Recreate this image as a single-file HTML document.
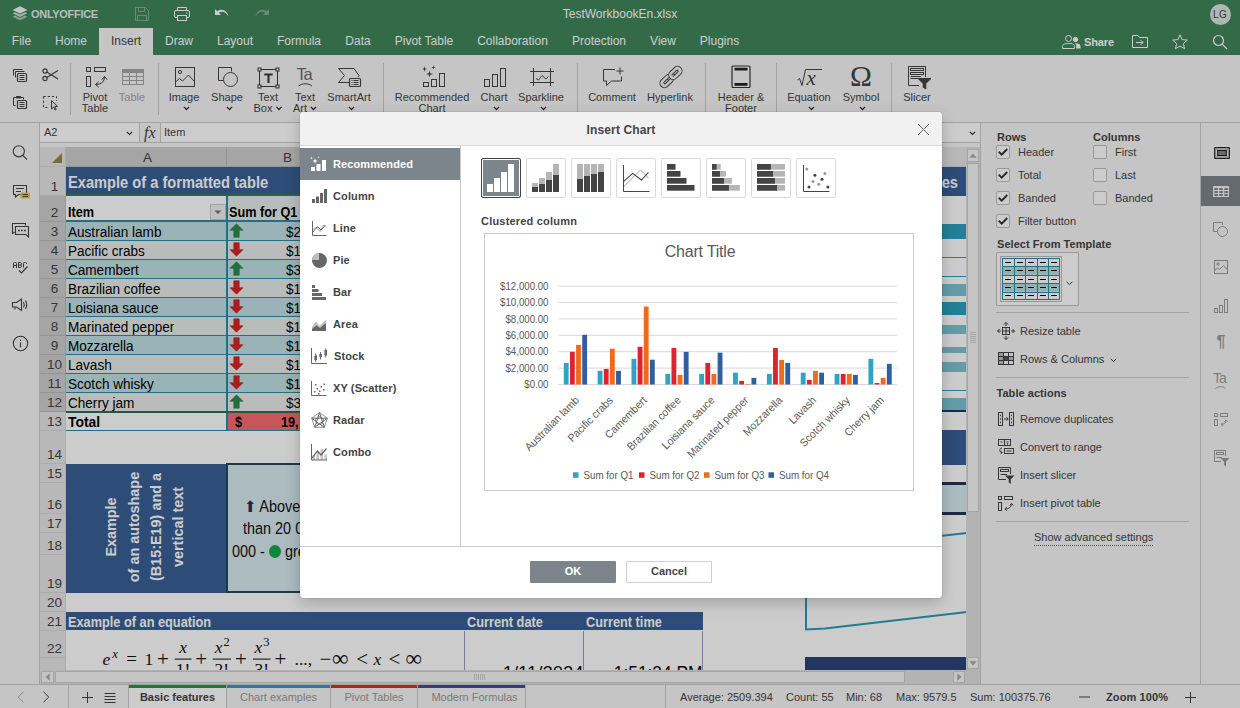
<!DOCTYPE html>
<html lang="en">
<head>
<meta charset="utf-8">
<title>TestWorkbookEn.xlsx</title>
<style>
*{box-sizing:border-box;margin:0;padding:0}
html,body{width:1240px;height:708px;overflow:hidden;background:#f7f7f7;font-family:"Liberation Sans",sans-serif;font-size:11px;color:#444}
.abs{position:absolute}
#app{position:absolute;left:0;top:0;width:1240px;height:708px;overflow:hidden;background:#f7f7f7}
/* ===== header ===== */
#hdr{position:absolute;left:0;top:0;width:1240px;height:54px;background:#40865c;color:#fff}
#hdr .logo{position:absolute;left:31px;top:8px;font-size:11px;font-weight:bold;letter-spacing:-.3px;color:#e3ede7}
#hdr .title{position:absolute;left:0;width:1240px;top:7px;text-align:center;font-size:12px;color:#fff}
#hdr .avatar{position:absolute;left:1209.5px;top:3.5px;width:21px;height:21px;border-radius:50%;background:#d9e7de;color:#444;font-size:10px;font-weight:normal;text-align:center;line-height:21px;letter-spacing:.3px}
.tab{position:absolute;top:28px;height:26px;line-height:26px;font-size:12px;color:#fff;text-align:center;white-space:nowrap}
.tab.act{background:#f7f7f7;color:#444}
/* ===== toolbar ===== */
#tb{position:absolute;left:0;top:54px;width:1240px;height:69px;background:#f7f7f7;border-bottom:1px solid #cbcbcb;overflow:hidden}
.sep{position:absolute;top:9px;width:1px;height:52px;background:#cbcbcb}
.cap{position:absolute;top:38px;font-size:11px;line-height:11px;color:#444;text-align:center;white-space:nowrap;transform:translateX(-50%)}
.cap.dis{color:#a5a5a5}
.ico{position:absolute;overflow:visible}
/* ===== left bar ===== */
#lb{position:absolute;left:0;top:123px;width:40px;height:561px;background:#f7f7f7;border-right:1px solid #cbcbcb}
/* ===== formula bar ===== */
#fb{position:absolute;left:40px;top:123px;width:940px;height:20px;background:#fff;border-bottom:1px solid #cbcbcb}
#fb .nm{position:absolute;left:0;top:0;width:100px;height:19px;border-right:1px solid #cbcbcb;line-height:19px;padding-left:4px;font-size:11px;color:#444}
#fb .fx{position:absolute;left:100px;top:0;width:21px;height:19px;border-right:1px solid #cbcbcb;background:#f7f7f7}
#fb .val{position:absolute;left:124px;top:0;line-height:19px;font-size:11px;color:#444}
/* ===== sheet ===== */
#sheet{position:absolute;left:0;top:0;width:981px;height:685px;background:#f7f7f7;overflow:hidden}
#grid{position:absolute;left:0;top:4px;width:926px;height:521px;background:#fff;overflow:hidden}
.ch{position:absolute;top:0;height:20px;background:#e6e6e6;border-right:1px solid #d8d8d8;border-bottom:1px solid #d8d8d8;font-size:13.5px;line-height:21px;text-align:center;color:#444;padding-left:3px}
.ch.sel{background:#cfcfcf;border-color:#bbb}
.rh{position:absolute;left:0;width:26px;background:#e6e6e6;border-right:1px solid #d8d8d8;border-bottom:1px solid #d8d8d8;font-size:13.5px;text-align:center;color:#444}
.rh.sel{background:#cfcfcf;border-color:#bbb}
.rh span{position:absolute;left:4px;right:0;bottom:0;line-height:17px}
.cell{position:absolute;font-family:"Liberation Sans","DejaVu Sans",sans-serif;font-size:14.67px;color:#000;white-space:nowrap;transform-origin:0 50%;transform:scaleX(.925)}
.cell.bd{font-weight:bold;transform:scaleX(.865)}
/* ===== right panel ===== */
#rp{position:absolute;left:980px;top:123px;width:220px;height:561px;background:#f7f7f7;border-left:1px solid #cbcbcb;font-size:11px;color:#444}
#rb{position:absolute;left:1200px;top:123px;width:40px;height:561px;background:#f7f7f7;border-left:1px solid #cbcbcb}
.lbl{position:absolute;white-space:nowrap;line-height:13px}
.b{font-weight:bold}
.chk{position:absolute;width:14px;height:14px;border:1px solid #c0c0c0;border-radius:2px;background:#fff}
.hr{position:absolute;left:15px;width:193px;height:1px;background:#cbcbcb}
/* ===== status bar ===== */
#sb{position:absolute;left:0;top:684px;width:1240px;height:24px;background:#f7f7f7;border-top:1px solid #cbcbcb;font-size:11px;color:#444}
.st{position:absolute;top:0;height:23px;line-height:24px;white-space:nowrap;text-align:center}
/* ===== modal ===== */
#mask{position:absolute;left:0;top:0;width:1240px;height:708px;background:rgba(0,0,0,.2)}
#dlg{position:absolute;left:300px;top:112px;width:642px;height:486px;background:#fff;border-radius:4px;box-shadow:0 5px 15px rgba(0,0,0,.2),0 0 0 1px rgba(0,0,0,.06);overflow:hidden;font-size:11px;color:#444}
#dlg .head{position:absolute;left:0;top:0;width:642px;height:34px;background:#f1f1f1;border-bottom:1px solid #d8d8d8;text-align:center;line-height:36px;font-size:12px;font-weight:bold;letter-spacing:.01em}
#dlg .menu{position:absolute;left:0;top:34px;width:161px;height:400px;border-right:1px solid #cbcbcb}
.mi{position:absolute;left:0;width:160px;height:32px;line-height:32px;padding-left:33px;font-weight:bold;letter-spacing:.01em;font-size:11px;color:#444}
.mi.act{background:#7d858c;color:#fff}
#dlg .foot{position:absolute;left:0;top:434px;width:642px;height:52px;border-top:1px solid #cbcbcb}
.btn{position:absolute;top:14px;height:22px;width:86px;line-height:18px;text-align:center;font-weight:bold;font-size:11px;border-radius:1px}
.btn.pri{background:#7d858c;color:#fff;line-height:20px}
.btn.sec{background:#fff;border:1px solid #cfcfcf;color:#444}
.ct{position:absolute;top:47px;width:40px;height:40px;border:1px solid #d8dadc;border-radius:2px;background:#fff}
.ct.act{background:#7d858c;border-color:#444;box-shadow:inset 0 0 0 1px #fff}
</style>
</head>
<body>
<div id="app">
<div id="sheet">
<div class="abs" style="left:66px;top:167px;width:901px;height:503px;background:#fff"></div>
<div class="abs" style="left:40px;top:147px;width:926px;height:20px;background:#e6e6e6;border-bottom:1px solid #d8d8d8"></div>
<div class="ch" style="left:40px;top:147px;width:26px"><svg class="ico" style="left:11px;top:5px" width="12" height="12" viewBox="0 0 12 12"><path d="M11 1 V11 H1 Z" fill="#8c8c3c"/></svg></div>
<div class="ch sel" style="left:66px;top:147px;width:161px">A</div>
<div class="ch sel" style="left:227px;top:147px;width:119px">B</div>
<div class="ch sel" style="left:346px;top:147px;width:119px">C</div>
<div class="ch sel" style="left:465px;top:147px;width:119px">D</div>
<div class="ch sel" style="left:584px;top:147px;width:119px">E</div>
<div class="ch" style="left:703px;top:147px;width:102px">F</div>
<div class="ch" style="left:805px;top:147px;width:162px">G</div>
<div class="rh" style="left:40px;top:167px;height:29px"><span>1</span></div>
<div class="rh sel" style="left:40px;top:196px;height:26px"><span>2</span></div>
<div class="rh sel" style="left:40px;top:222px;height:19px"><span>3</span></div>
<div class="rh sel" style="left:40px;top:241px;height:19px"><span>4</span></div>
<div class="rh sel" style="left:40px;top:260px;height:19px"><span>5</span></div>
<div class="rh sel" style="left:40px;top:279px;height:19px"><span>6</span></div>
<div class="rh sel" style="left:40px;top:298px;height:19px"><span>7</span></div>
<div class="rh sel" style="left:40px;top:317px;height:19px"><span>8</span></div>
<div class="rh sel" style="left:40px;top:336px;height:19px"><span>9</span></div>
<div class="rh sel" style="left:40px;top:355px;height:19px"><span>10</span></div>
<div class="rh sel" style="left:40px;top:374px;height:19px"><span>11</span></div>
<div class="rh sel" style="left:40px;top:393px;height:19px"><span>12</span></div>
<div class="rh" style="left:40px;top:412px;height:19px"><span>13</span></div>
<div class="rh" style="left:40px;top:431px;height:33px"><span>14</span></div>
<div class="rh" style="left:40px;top:464px;height:19px"><span>15</span></div>
<div class="rh" style="left:40px;top:483px;height:31px"><span>16</span></div>
<div class="rh" style="left:40px;top:514px;height:19px"><span>17</span></div>
<div class="rh" style="left:40px;top:533px;height:22px"><span>18</span></div>
<div class="rh" style="left:40px;top:555px;height:38px"><span>19</span></div>
<div class="rh" style="left:40px;top:593px;height:19px"><span>20</span></div>
<div class="rh" style="left:40px;top:612px;height:19px"><span>21</span></div>
<div class="rh" style="left:40px;top:631px;height:27px"><span>22</span></div>
<div class="rh" style="left:40px;top:658px;height:43px"></div>
<div class="abs" style="left:66px;top:167px;width:901px;height:27px;background:#3a5f96"></div>
<div class="abs" style="left:66px;top:194px;width:637px;height:2px;background:#3b7a57"></div>
<div class="abs" style="left:703px;top:194px;width:264px;height:2px;background:#3a5f96"></div>
<div class="cell" style="left:68px;top:173px;font-size:16px;font-weight:bold;color:#fff;line-height:20px;transform:scaleX(.915)">Example of a formatted table</div>
<div class="cell" style="right:23px;top:173px;font-size:16px;font-weight:bold;color:#fff;line-height:20px;transform:scaleX(.915);transform-origin:100% 50%">Sparklines</div>
<div class="abs" style="left:228px;top:196px;width:475px;height:24px;background:#e6edec"></div>
<div class="abs" style="left:66px;top:222px;width:637px;height:18px;background:#c1e0e5"></div>
<div class="abs" style="left:66px;top:240px;width:637px;height:1px;background:#2b8ca6"></div>
<div class="cell" style="left:68px;top:224px;line-height:17px">Australian lamb</div>
<svg class="ico" style="left:229px;top:223px" width="15" height="15" viewBox="0 0 15 15"><path d="M7.500 .8 L14 7.300 H10.200 V14.200 H4.800 V7.300 H1 Z" fill="#2f8a4e" stroke="#287a44" stroke-width=".6"/></svg>
<div class="cell" style="left:286px;top:224px;line-height:17px;width:60px">$2</div>
<div class="abs" style="left:66px;top:241px;width:637px;height:18px;background:#e6edec"></div>
<div class="abs" style="left:66px;top:259px;width:637px;height:1px;background:#2b8ca6"></div>
<div class="cell" style="left:68px;top:243px;line-height:17px">Pacific crabs</div>
<svg class="ico" style="left:229px;top:242px" width="15" height="15" viewBox="0 0 15 15"><path d="M7.500 14.200 L14 7.700 H10.200 V.8 H4.800 V7.700 H1 Z" fill="#d92525" stroke="#c01f1f" stroke-width=".6"/></svg>
<div class="cell" style="left:286px;top:243px;line-height:17px;width:60px">$1</div>
<div class="abs" style="left:66px;top:260px;width:637px;height:18px;background:#c1e0e5"></div>
<div class="abs" style="left:66px;top:278px;width:637px;height:1px;background:#2b8ca6"></div>
<div class="cell" style="left:68px;top:262px;line-height:17px">Camembert</div>
<svg class="ico" style="left:229px;top:261px" width="15" height="15" viewBox="0 0 15 15"><path d="M7.500 .8 L14 7.300 H10.200 V14.200 H4.800 V7.300 H1 Z" fill="#2f8a4e" stroke="#287a44" stroke-width=".6"/></svg>
<div class="cell" style="left:286px;top:262px;line-height:17px;width:60px">$3</div>
<div class="abs" style="left:66px;top:279px;width:637px;height:18px;background:#e6edec"></div>
<div class="abs" style="left:66px;top:297px;width:637px;height:1px;background:#2b8ca6"></div>
<div class="cell" style="left:68px;top:281px;line-height:17px">Brazilian coffee</div>
<svg class="ico" style="left:229px;top:280px" width="15" height="15" viewBox="0 0 15 15"><path d="M7.500 14.200 L14 7.700 H10.200 V.8 H4.800 V7.700 H1 Z" fill="#d92525" stroke="#c01f1f" stroke-width=".6"/></svg>
<div class="cell" style="left:286px;top:281px;line-height:17px;width:60px">$1</div>
<div class="abs" style="left:66px;top:298px;width:637px;height:18px;background:#c1e0e5"></div>
<div class="abs" style="left:66px;top:316px;width:637px;height:1px;background:#2b8ca6"></div>
<div class="cell" style="left:68px;top:300px;line-height:17px">Loisiana sauce</div>
<svg class="ico" style="left:229px;top:299px" width="15" height="15" viewBox="0 0 15 15"><path d="M7.500 14.200 L14 7.700 H10.200 V.8 H4.800 V7.700 H1 Z" fill="#d92525" stroke="#c01f1f" stroke-width=".6"/></svg>
<div class="cell" style="left:286px;top:300px;line-height:17px;width:60px">$1</div>
<div class="abs" style="left:66px;top:317px;width:637px;height:18px;background:#e6edec"></div>
<div class="abs" style="left:66px;top:335px;width:637px;height:1px;background:#2b8ca6"></div>
<div class="cell" style="left:68px;top:319px;line-height:17px">Marinated pepper</div>
<svg class="ico" style="left:229px;top:318px" width="15" height="15" viewBox="0 0 15 15"><path d="M7.500 14.200 L14 7.700 H10.200 V.8 H4.800 V7.700 H1 Z" fill="#d92525" stroke="#c01f1f" stroke-width=".6"/></svg>
<div class="cell" style="left:286px;top:319px;line-height:17px;width:60px">$1</div>
<div class="abs" style="left:66px;top:336px;width:637px;height:18px;background:#c1e0e5"></div>
<div class="abs" style="left:66px;top:354px;width:637px;height:1px;background:#2b8ca6"></div>
<div class="cell" style="left:68px;top:338px;line-height:17px">Mozzarella</div>
<svg class="ico" style="left:229px;top:337px" width="15" height="15" viewBox="0 0 15 15"><path d="M7.500 14.200 L14 7.700 H10.200 V.8 H4.800 V7.700 H1 Z" fill="#d92525" stroke="#c01f1f" stroke-width=".6"/></svg>
<div class="cell" style="left:286px;top:338px;line-height:17px;width:60px">$1</div>
<div class="abs" style="left:66px;top:355px;width:637px;height:18px;background:#e6edec"></div>
<div class="abs" style="left:66px;top:373px;width:637px;height:1px;background:#2b8ca6"></div>
<div class="cell" style="left:68px;top:357px;line-height:17px">Lavash</div>
<svg class="ico" style="left:229px;top:356px" width="15" height="15" viewBox="0 0 15 15"><path d="M7.500 14.200 L14 7.700 H10.200 V.8 H4.800 V7.700 H1 Z" fill="#d92525" stroke="#c01f1f" stroke-width=".6"/></svg>
<div class="cell" style="left:286px;top:357px;line-height:17px;width:60px">$1</div>
<div class="abs" style="left:66px;top:374px;width:637px;height:18px;background:#c1e0e5"></div>
<div class="abs" style="left:66px;top:392px;width:637px;height:1px;background:#2b8ca6"></div>
<div class="cell" style="left:68px;top:376px;line-height:17px">Scotch whisky</div>
<svg class="ico" style="left:229px;top:375px" width="15" height="15" viewBox="0 0 15 15"><path d="M7.500 14.200 L14 7.700 H10.200 V.8 H4.800 V7.700 H1 Z" fill="#d92525" stroke="#c01f1f" stroke-width=".6"/></svg>
<div class="cell" style="left:286px;top:376px;line-height:17px;width:60px">$1</div>
<div class="abs" style="left:66px;top:393px;width:637px;height:18px;background:#e6edec"></div>
<div class="abs" style="left:66px;top:411px;width:637px;height:1px;background:#2b8ca6"></div>
<div class="cell" style="left:68px;top:395px;line-height:17px">Cherry jam</div>
<svg class="ico" style="left:229px;top:394px" width="15" height="15" viewBox="0 0 15 15"><path d="M7.500 .8 L14 7.300 H10.200 V14.200 H4.800 V7.300 H1 Z" fill="#2f8a4e" stroke="#287a44" stroke-width=".6"/></svg>
<div class="cell" style="left:286px;top:395px;line-height:17px;width:60px">$3</div>
<div class="abs" style="left:66px;top:220px;width:637px;height:2px;background:#2b8ca6"></div>
<div class="abs" style="left:226px;top:196px;width:1.600px;height:215px;background:#2b8ca6"></div>
<div class="cell" style="left:68px;top:203px;line-height:18px;font-weight:bold;transform:scaleX(.865)">Item</div>
<div class="abs" style="left:210px;top:204px;width:16px;height:16px;background:#f1f1f1;border:1px solid #cfcfcf"><svg class="ico" style="left:3px;top:5px" width="8" height="5" viewBox="0 0 8 5"><path d="M.5 .5 H7.500 L4 4.300 Z" fill="#7a7a7a"/></svg></div>
<div class="cell" style="left:229px;top:203px;line-height:18px;font-weight:bold;transform:scaleX(.865)">Sum for Q1</div>
<div class="abs" style="left:66px;top:411px;width:637px;height:2px;background:#2f6b57"></div>
<div class="cell" style="left:68px;top:414px;line-height:17px;font-weight:bold;transform:scaleX(.95)">Total</div>
<div class="abs" style="left:227.500px;top:413px;width:475.500px;height:17px;background:#fb6b6f"></div>
<div class="abs" style="left:226px;top:413px;width:1.500px;height:17px;background:#2b8ca6"></div>
<div class="cell" style="left:235px;top:414px;line-height:17px;font-weight:bold;transform:scaleX(.865)">$</div>
<div class="cell" style="left:281px;top:414px;line-height:17px;font-weight:bold;transform:scaleX(.865)">19,</div>
<div class="abs" style="left:66px;top:430px;width:637px;height:1px;background:#2b8ca6"></div>
<div class="abs" style="left:66px;top:464px;width:161px;height:129px;background:#3a5f96"></div>
<div class="abs" style="left:111px;top:527px;width:0;height:0"><div style="position:absolute;left:-70px;top:-10px;width:140px;height:20px;line-height:20px;text-align:center;transform:rotate(-90deg);color:#fff;font-weight:bold;font-size:14.400px;white-space:nowrap">Example</div></div>
<div class="abs" style="left:133.5px;top:527px;width:0;height:0"><div style="position:absolute;left:-70px;top:-10px;width:140px;height:20px;line-height:20px;text-align:center;transform:rotate(-90deg);color:#fff;font-weight:bold;font-size:14.400px;white-space:nowrap">of an autoshape</div></div>
<div class="abs" style="left:155.5px;top:527px;width:0;height:0"><div style="position:absolute;left:-70px;top:-10px;width:140px;height:20px;line-height:20px;text-align:center;transform:rotate(-90deg);color:#fff;font-weight:bold;font-size:14.400px;white-space:nowrap">(B15:E19) and a</div></div>
<div class="abs" style="left:178px;top:527px;width:0;height:0"><div style="position:absolute;left:-70px;top:-10px;width:140px;height:20px;line-height:20px;text-align:center;transform:rotate(-90deg);color:#fff;font-weight:bold;font-size:14.400px;white-space:nowrap">vertical text</div></div>
<div class="abs" style="left:226px;top:463px;width:479px;height:130px;background:#d6eaf0;border:2px solid #1f4a55"></div>
<div class="cell" style="left:244px;top:495px;line-height:24px;font-size:15.600px;color:#111"><span style="color:#2b2b55">&#11014;</span> Above 20 000</div>
<div class="cell" style="left:243px;top:517px;line-height:24px;font-size:15.600px;color:#111">than 20 000</div>
<div class="cell" style="left:232px;top:540px;line-height:24px;font-size:15.600px;color:#111">000 - <span style="display:inline-block;width:13px;height:13px;border-radius:50%;background:#13a84a;vertical-align:-1px"></span> green</div>
<div class="abs" style="left:66px;top:612px;width:637px;height:18px;background:#3a5f96"></div>
<div class="cell" style="left:68px;top:614px;line-height:17px;font-weight:bold;color:#fff;transform:scaleX(.87)">Example of an equation</div>
<div class="cell" style="left:467px;top:614px;line-height:17px;font-weight:bold;color:#fff;transform:scaleX(.87)">Current date</div>
<div class="cell" style="left:586px;top:614px;line-height:17px;font-weight:bold;color:#fff;transform:scaleX(.87)">Current time</div>
<div class="abs" style="left:464px;top:631px;width:1px;height:40px;background:#9a9ac8"></div>
<div class="abs" style="left:583px;top:631px;width:1px;height:40px;background:#9a9ac8"></div>
<div class="abs" style="left:702px;top:631px;width:1px;height:40px;background:#9a9ac8"></div>
<div class="cell" style="left:465px;width:118.500px;text-align:right;top:662px;line-height:22px;font-size:18.670px;color:#111;transform:scaleX(.99);transform-origin:100% 50%">1/11/2024</div>
<div class="cell" style="left:584px;width:118.500px;text-align:right;top:662px;line-height:22px;font-size:18.670px;color:#111;transform:scaleX(.93);transform-origin:100% 50%">1:51:34 PM</div>
<svg class="ico" style="left:90px;top:628px" width="350" height="42" viewBox="0 0 350 42" font-family="Liberation Serif, serif" fill="#111"><text x="12.5" y="36.7" font-size="17.5" font-style="italic" text-anchor="start">e</text><text x="22.3" y="30.200000000000003" font-size="12.5" font-style="italic" text-anchor="start">x</text><text x="36.2" y="37.0" font-size="19" text-anchor="start">=</text><text x="54.5" y="36.7" font-size="17.5" text-anchor="start">1</text><text x="67" y="37.5" font-size="21" text-anchor="start">+</text><rect x="84.7" y="30.600" width="16.9" height="1" fill="#111"/><text x="93.15" y="24.5" font-size="17.5" font-style="italic" text-anchor="middle">x</text><text x="93.15" y="47" font-size="17.5" text-anchor="middle">1!</text><rect x="122.8" y="30.600" width="18.2" height="1" fill="#111"/><text x="128.6" y="24.5" font-size="17.5" font-style="italic" text-anchor="middle">x</text><text x="133.4" y="17.5" font-size="12.5" text-anchor="start">2</text><text x="131.9" y="47" font-size="17.5" text-anchor="middle">2!</text><rect x="163" y="30.600" width="17.6" height="1" fill="#111"/><text x="168.5" y="24.5" font-size="17.5" font-style="italic" text-anchor="middle">x</text><text x="173.3" y="17.5" font-size="12.5" text-anchor="start">3</text><text x="171.8" y="47" font-size="17.5" text-anchor="middle">3!</text><text x="105.3" y="37.5" font-size="21" text-anchor="start">+</text><text x="144.9" y="37.5" font-size="21" text-anchor="start">+</text><text x="184.4" y="37.5" font-size="21" text-anchor="start">+</text><text x="204.6" y="36.7" font-size="17.5" text-anchor="start">...,</text><text x="229.5" y="37.5" font-size="21" text-anchor="start">&#8722;</text><text x="242" y="38.2" font-size="23" text-anchor="start">&#8734;</text><text x="266.2" y="37.5" font-size="21" text-anchor="start">&lt;</text><text x="283.5" y="36.7" font-size="17.5" font-style="italic" text-anchor="start">x</text><text x="298.5" y="37.5" font-size="21" text-anchor="start">&lt;</text><text x="315.5" y="38.2" font-size="23" text-anchor="start">&#8734;</text></svg>
<div class="abs" style="left:805px;top:196px;width:162px;height:472px;background:#fff"></div>
<div class="abs" style="left:805px;top:224px;width:162px;height:15px;background:#2aa0bd"></div>
<div class="abs" style="left:805px;top:257px;width:162px;height:1px;background:#2aa0bd"></div>
<div class="abs" style="left:805px;top:276px;width:162px;height:1px;background:#2aa0bd"></div>
<div class="abs" style="left:805px;top:284px;width:162px;height:12px;background:#7cc3d3"></div>
<div class="abs" style="left:805px;top:302px;width:162px;height:13px;background:#2aa0bd"></div>
<div class="abs" style="left:805px;top:325px;width:162px;height:9px;background:#7cc3d3"></div>
<div class="abs" style="left:805px;top:347px;width:162px;height:6px;background:#7cc3d3"></div>
<div class="abs" style="left:805px;top:362px;width:162px;height:10px;background:#7cc3d3"></div>
<div class="abs" style="left:805px;top:390px;width:162px;height:1px;background:#2aa0bd"></div>
<div class="abs" style="left:805px;top:398px;width:162px;height:12px;background:#7cc3d3"></div>
<div class="abs" style="left:805px;top:410px;width:162px;height:2px;background:#26335c"></div>
<div class="abs" style="left:805px;top:430px;width:162px;height:35px;background:#3a5f96"></div>
<div class="abs" style="left:805px;top:482px;width:162px;height:3px;background:#26335c"></div>
<div class="abs" style="left:805px;top:485px;width:162px;height:27px;background:#d6eaf0"></div>
<div class="abs" style="left:805px;top:512px;width:162px;height:3px;background:#26335c"></div>
<svg class="ico" style="left:805px;top:520px" width="162" height="120" viewBox="0 0 162 120" fill="none" stroke="#2a9cba" stroke-width="2"><path d="M0 31 L162 13"/><path d="M1 0 V109.500 L20 108.500 L162 92"/></svg>
<div class="abs" style="left:805px;top:657px;width:162px;height:13px;background:#2b4478"></div>
<div class="abs" style="left:966px;top:147px;width:15px;height:537px;background:#e0e0e0"></div>
<div class="abs" style="left:40px;top:670px;width:941px;height:14px;background:#e0e0e0"></div>
<div class="abs" style="left:967px;top:149px;width:12px;height:13px;background:#f7f7f7;border:1px solid #cfcfcf"><svg class="ico" style="left:1px;top:3px" width="8" height="5" viewBox="0 0 8 5"><path d="M.3 4.700 L4 .5 L7.700 4.700 Z" fill="#adadad"/></svg></div>
<div class="abs" style="left:967px;top:163px;width:12px;height:349px;background:#f7f7f7;border:1px solid #cfcfcf"><svg class="ico" style="left:2px;top:168px" width="6" height="12" viewBox="0 0 6 12" stroke="#cfcfcf" stroke-width="1"><path d="M0 .5H6M0 2.500H6M0 4.500H6M0 6.500H6M0 8.500H6M0 10.500H6"/></svg></div>
<div class="abs" style="left:967px;top:657px;width:12px;height:12px;background:#f7f7f7;border:1px solid #cfcfcf"><svg class="ico" style="left:1px;top:3px" width="8" height="5" viewBox="0 0 8 5"><path d="M.3 .3 L4 4.500 L7.700 .3 Z" fill="#adadad"/></svg></div>
<div class="abs" style="left:41px;top:671px;width:13px;height:12px;background:#f7f7f7;border:1px solid #cfcfcf"><svg class="ico" style="left:3px;top:1px" width="5" height="8" viewBox="0 0 5 8"><path d="M4.700 .3 L.5 4 L4.700 7.700 Z" fill="#adadad"/></svg></div>
<div class="abs" style="left:55px;top:671px;width:850px;height:12px;background:#f7f7f7;border:1px solid #cfcfcf"><svg class="ico" style="left:418px;top:2px" width="12" height="6" viewBox="0 0 12 6" stroke="#cfcfcf" stroke-width="1"><path d="M.5 0V6M2.500 0V6M4.500 0V6M6.500 0V6M8.500 0V6M10.500 0V6"/></svg></div>
<div class="abs" style="left:953px;top:671px;width:12px;height:12px;background:#f7f7f7;border:1px solid #cfcfcf"><svg class="ico" style="left:3px;top:1px" width="5" height="8" viewBox="0 0 5 8"><path d="M.3 .3 L4.500 4 L.3 7.700 Z" fill="#adadad"/></svg></div>
</div>

<div id="hdr">
  <svg class="ico" style="left:11px;top:5px" width="18" height="18" viewBox="0 0 16 16">
    <path d="M8 1.2 L14.6 4.4 L8 7.6 L1.4 4.4 Z" fill="#fff" opacity=".95"/>
    <path d="M1.4 7.4 L3.6 6.35 L8 8.5 L12.4 6.35 L14.6 7.4 L8 10.6 Z" fill="#fff" opacity=".75"/>
    <path d="M1.4 10.4 L3.6 9.35 L8 11.5 L12.4 9.35 L14.6 10.4 L8 13.6 Z" fill="#fff" opacity=".55"/>
  </svg>
  <div class="logo">ONLYOFFICE</div>
  <!-- save (disabled) -->
  <svg class="ico" style="left:134px;top:6px;opacity:.35" width="16" height="16" viewBox="0 0 16 16" fill="none" stroke="#fff" stroke-width="1">
    <path d="M1.5 1.5 H11.5 L14.5 4.5 V14.5 H1.5 Z"/><path d="M4.5 1.5 V5.5 H10.5 V1.5"/><path d="M3.5 14.5 V9.5 H12.5 V14.5"/>
  </svg>
  <!-- print -->
  <svg class="ico" style="left:173px;top:6px" width="18" height="16" viewBox="0 0 18 16" fill="none" stroke="#fff" stroke-width="1">
    <path d="M4.5 4.5 V1.5 H13.5 V4.5"/><rect x="1.5" y="4.5" width="15" height="7" rx="1.5"/><rect x="4.5" y="9.5" width="9" height="5" fill="#40865c"/><path d="M13 7 h1.5"/>
  </svg>
  <!-- undo -->
  <svg class="ico" style="left:214px;top:7px" width="16" height="14" viewBox="0 0 16 14">
    <path d="M1 2 L1 8 L7 8 L4.8 5.8 C8 3.6 12 4.6 14.6 9.6 C13.6 3.6 7.6 0.6 3.2 4.2 Z" fill="#fff"/>
  </svg>
  <!-- redo (disabled) -->
  <svg class="ico" style="left:254px;top:7px;opacity:.35" width="16" height="14" viewBox="0 0 16 14">
    <path d="M15 2 L15 8 L9 8 L11.2 5.8 C8 3.6 4 4.6 1.4 9.6 C2.4 3.6 8.4 0.6 12.8 4.2 Z" fill="#fff"/>
  </svg>
  <div class="title">TestWorkbookEn.xlsx</div>
  <div class="avatar">LG</div>

  <div class="tab" style="left:0;width:43px">File</div>
  <div class="tab" style="left:43px;width:56px">Home</div>
  <div class="tab act" style="left:99px;width:54px">Insert</div>
  <div class="tab" style="left:153px;width:52px">Draw</div>
  <div class="tab" style="left:205px;width:60px">Layout</div>
  <div class="tab" style="left:265px;width:68px">Formula</div>
  <div class="tab" style="left:333px;width:50px">Data</div>
  <div class="tab" style="left:383px;width:82px">Pivot Table</div>
  <div class="tab" style="left:465px;width:95px">Collaboration</div>
  <div class="tab" style="left:560px;width:78px">Protection</div>
  <div class="tab" style="left:638px;width:50px">View</div>
  <div class="tab" style="left:688px;width:63px">Plugins</div>

  <!-- share -->
  <svg class="ico" style="left:1062px;top:34px" width="20" height="16" viewBox="0 0 20 16" fill="none" stroke="#fff" stroke-width="1">
    <circle cx="6.5" cy="4.5" r="3"/><path d="M.5 14.5 V12.5 C.5 10 3 9.5 6.5 9.5 S12.5 10 12.5 12.5 V14.5 Z"/>
    <circle cx="13.5" cy="5.5" r="2.2" fill="#fff"/><path d="M13.2 9.3 C16.6 9.2 18.5 10.4 18.5 12.3 V14.5 H14.2 V12.3 C14.2 11 13.8 10 13.2 9.3 Z" fill="#fff" stroke="none"/>
  </svg>
  <div class="abs" style="left:1084px;top:28px;line-height:28px;font-size:11px;font-weight:bold;color:#fff;letter-spacing:-.1px">Share</div>
  <!-- open location -->
  <svg class="ico" style="left:1131px;top:34px" width="18" height="16" viewBox="0 0 18 16" fill="none" stroke="#fff" stroke-width="1">
    <path d="M1.5 13.5 V1.5 H7 L8.5 3.5 H16.5 V13.5 Z"/><path d="M5 8.5 H12 M9.5 6 L12 8.5 L9.5 11"/>
  </svg>
  <!-- star -->
  <svg class="ico" style="left:1171px;top:33px" width="18" height="18" viewBox="0 0 18 18" fill="none" stroke="#fff" stroke-width="1">
    <path d="M9 1.8 L11.1 6.6 L16.3 7.1 L12.4 10.6 L13.5 15.7 L9 13 L4.5 15.7 L5.6 10.6 L1.7 7.1 L6.9 6.6 Z"/>
  </svg>
  <!-- search -->
  <svg class="ico" style="left:1211px;top:33px" width="18" height="18" viewBox="0 0 18 18" fill="none" stroke="#fff" stroke-width="1.2">
    <circle cx="7.5" cy="7.5" r="5"/><path d="M11.2 11.2 L16 16"/>
  </svg>
</div>

<div id="tb">
  <!-- copy -->
  <svg class="ico" style="left:12px;top:14px" width="16" height="15" viewBox="0 0 16 15" fill="none" stroke="#444" stroke-width="1">
    <path d="M1.5 7.5 V1.5 H10.5"/><path d="M3.5 9.5 V3.5 H12.5"/><rect x="5.5" y="5.5" width="9" height="8" rx="1" stroke-width="1.2"/><path d="M7.500 7.500 H12.500 M7.500 9.500 H12.500 M7.500 11.500 H12.500" stroke-width="1"/>
  </svg>
  <!-- paste -->
  <svg class="ico" style="left:12px;top:41px" width="16" height="15" viewBox="0 0 16 15" fill="none" stroke="#444" stroke-width="1">
    <path d="M3.5 10.5 H1.5 V2.5 H11.5 V4.5"/><rect x="4" y="1" width="5" height="2.4" fill="#444" stroke="none"/><rect x="5.500" y="5.500" width="9" height="8" rx="1" stroke-width="1.2"/><path d="M7.500 7.500 H12.500 M7.500 9.500 H12.500 M7.500 11.500 H12.500" stroke-width="1"/>
  </svg>
  <!-- cut -->
  <svg class="ico" style="left:42px;top:14px" width="17" height="14" viewBox="0 0 17 14" fill="none" stroke="#444" stroke-width="1">
    <circle cx="3" cy="3" r="2.100" stroke-width="1.200"/><circle cx="3" cy="10.500" r="2.100" stroke-width="1.200"/><path d="M4.800 4 L16 11 M4.800 9.500 L16 2.500" stroke-width="1.200"/>
  </svg>
  <!-- select -->
  <svg class="ico" style="left:42px;top:41px" width="17" height="16" viewBox="0 0 17 16" fill="none" stroke="#444" stroke-width="1">
    <path d="M1.5 1.5 H14.5 V6 M1.5 1.500 V12.500 H7" stroke-dasharray="2.200 2"/><path d="M9.5 5.500 V14 L11.600 12 L13 15 L14.200 14.400 L12.800 11.600 L15.500 11.300 Z"/>
  </svg>
  <div class="sep" style="left:70px"></div>
  <!-- pivot -->
  <svg class="ico" style="left:85px;top:12px" width="24" height="22" viewBox="0 0 24 22" fill="none" stroke="#444" stroke-width="1">
    <rect x="1.5" y="1.500" width="4" height="4"/><rect x="9.500" y="1.500" width="11" height="4"/><rect x="1.500" y="10.500" width="4" height="10"/>
    <path d="M10.500 18.500 Q19.500 18.500 19.500 10.500 M13.700 15.800 L10.500 18.500 L13.700 21.200 M16.800 13.700 L19.500 10.500 L22.200 13.700"/>
  </svg>
  <div class="cap" style="left:95px">Pivot<br>Table</div>
  <!-- table (disabled) -->
  <svg class="ico" style="left:121px;top:14px;opacity:.45" width="24" height="18" viewBox="0 0 24 18" fill="none" stroke="#444" stroke-width="1">
    <rect x="1.500" y="1.500" width="21" height="15"/><rect x="1.500" y="1.500" width="21" height="3" fill="#444"/><path d="M1.500 8.500 H22.500 M1.500 12.500 H22.500 M8.500 4.500 V16.500 M15.500 4.500 V16.500"/>
  </svg>
  <div class="cap dis" style="left:132px">Table</div>
  <div class="sep" style="left:158px"></div>
  <!-- image -->
  <svg class="ico" style="left:174px;top:12px" width="22" height="22" viewBox="0 0 22 22" fill="none" stroke="#444" stroke-width="1">
    <rect x="1.500" y="1.500" width="19" height="19"/><circle cx="6" cy="6" r="1.600"/><path d="M1.500 16 L5.500 12.500 L8.500 15 L14.500 9 L20.500 15.500"/>
  </svg>
  <div class="cap" style="left:184px">Image</div>
  <svg class="ico" style="left:182.5px;top:52px" width="7" height="5" viewBox="0 0 7 5" fill="none" stroke="#333" stroke-width="1.300"><path d="M.9 .9 L3.500 3.500 L6.100 .9"/></svg>
  <!-- shape -->
  <svg class="ico" style="left:217px;top:12px" width="24" height="24" viewBox="0 0 24 24" fill="none" stroke="#444" stroke-width="1">
    <path d="M6 14.500 H1.500 V1.500 H14.500 V5.500"/><circle cx="13.500" cy="13.500" r="7"/>
  </svg>
  <div class="cap" style="left:227px">Shape</div>
  <svg class="ico" style="left:225.5px;top:52px" width="7" height="5" viewBox="0 0 7 5" fill="none" stroke="#333" stroke-width="1.300"><path d="M.9 .9 L3.500 3.500 L6.100 .9"/></svg>
  <!-- text box -->
  <svg class="ico" style="left:257px;top:12px" width="24" height="24" viewBox="0 0 24 24" fill="none" stroke="#3a3a3a" stroke-width="1">
    <rect x="2.500" y="3.500" width="18" height="17"/><g fill="#f7f7f7" stroke-width="1"><rect x="1" y="2" width="3" height="3"/><rect x="19" y="2" width="3" height="3"/><rect x="1" y="19" width="3" height="3"/><rect x="19" y="19" width="3" height="3"/></g>
    <path d="M7.300 8.500 H15.700 M11.500 8.500 V17" stroke-width="2.100"/>
  </svg>
  <div class="cap" style="left:268px">Text<br>Box <svg width="7" height="5" viewBox="0 0 7 5" fill="none" stroke="#333" stroke-width="1.300" style="vertical-align:1px"><path d="M.9 .9 L3.500 3.500 L6.100 .9"/></svg></div>
  <!-- text art -->
  <svg class="ico" style="left:295px;top:12px" width="22" height="24" viewBox="0 0 22 24" fill="none" stroke="#444" stroke-width="1">
    <text x="1.500" y="13.500" font-family="Liberation Sans, sans-serif" font-size="16.500" fill="#555" stroke="none" letter-spacing="-1.200" opacity=".85">Ta</text>
    <path d="M3.500 20 C7.500 17 13 17 17 20"/>
  </svg>
  <div class="cap" style="left:305px">Text<br>Art <svg width="7" height="5" viewBox="0 0 7 5" fill="none" stroke="#333" stroke-width="1.300" style="vertical-align:1px"><path d="M.9 .9 L3.500 3.500 L6.100 .9"/></svg></div>
  <!-- smartart -->
  <svg class="ico" style="left:337px;top:12px" width="26" height="24" viewBox="0 0 26 24" fill="none" stroke="#444" stroke-width="1">
    <path d="M12 16.500 H1.500 L7.500 9.500 L1.500 2.500 H17 L22 9.500 L21 11"/><rect x="12.500" y="12.500" width="11" height="8" rx="1" fill="#f7f7f7" stroke-width="1.200"/><path d="M14.500 14.500 h1 M16.500 14.500 H21.500 M14.500 16.500 h1 M16.500 16.500 H21.500 M14.500 18.500 h1 M16.500 18.500 H21.500" stroke-width="1"/>
  </svg>
  <div class="cap" style="left:349px">SmartArt</div>
  <svg class="ico" style="left:347.5px;top:52px" width="7" height="5" viewBox="0 0 7 5" fill="none" stroke="#333" stroke-width="1.300"><path d="M.9 .9 L3.500 3.500 L6.100 .9"/></svg>
  <div class="sep" style="left:383px"></div>
  <!-- recommended chart -->
  <svg class="ico" style="left:420px;top:10px" width="28" height="26" viewBox="0 0 28 26" fill="none" stroke="#444" stroke-width="1">
    <rect x="3.500" y="18.500" width="5" height="4"/><rect x="11.500" y="15.500" width="5" height="7"/><rect x="19.500" y="9.500" width="5" height="13"/>
    <path d="M4.5 2.2 L5.116 4.384 L7.3 5 L5.116 5.616 L4.5 7.8 L3.884 5.616 L1.7000000000000002 5 L3.884 4.384 Z M9.5 6.4 L10.292 9.208 L13.1 10 L10.292 10.792 L9.5 13.6 L8.708 10.792 L5.9 10 L8.708 9.208 Z M13.5 1.2000000000000002 L14.006 2.9939999999999998 L15.8 3.5 L14.006 4.006 L13.5 5.8 L12.994 4.006 L11.2 3.5 L12.994 2.9939999999999998 Z" fill="#444" stroke="none"/>
  </svg>
  <div class="cap" style="left:432px">Recommended<br>Chart</div>
  <!-- chart -->
  <svg class="ico" style="left:482px;top:12px" width="26" height="24" viewBox="0 0 26 24" fill="none" stroke="#444" stroke-width="1">
    <rect x="2.500" y="13.500" width="5" height="7"/><rect x="10.500" y="8.500" width="5" height="12"/><rect x="18.500" y="2.500" width="5" height="18"/>
  </svg>
  <div class="cap" style="left:494px">Chart</div>
  <svg class="ico" style="left:492.5px;top:52px" width="7" height="5" viewBox="0 0 7 5" fill="none" stroke="#333" stroke-width="1.300"><path d="M.9 .9 L3.500 3.500 L6.100 .9"/></svg>
  <!-- sparkline -->
  <svg class="ico" style="left:529px;top:12px" width="26" height="24" viewBox="0 0 26 24" fill="none" stroke="#444" stroke-width="1">
    <path d="M1 5.500 H25 M1 16.500 H25 M4.500 2 V20 M21.500 2 V20"/><path d="M7 12.500 L9.500 14 L13 9.500 L17 13 L19.500 10.500" stroke-width=".9"/>
  </svg>
  <div class="cap" style="left:541px">Sparkline</div>
  <svg class="ico" style="left:539.5px;top:52px" width="7" height="5" viewBox="0 0 7 5" fill="none" stroke="#333" stroke-width="1.300"><path d="M.9 .9 L3.500 3.500 L6.100 .9"/></svg>
  <div class="sep" style="left:577px"></div>
  <!-- comment -->
  <svg class="ico" style="left:601px;top:12px" width="24" height="24" viewBox="0 0 24 24" fill="none" stroke="#444" stroke-width="1">
    <path d="M14 3.500 H2.500 V15 H5.500 V19.500 L10.500 15 H20.500 V10.500"/><path d="M19 1.500 V8.500 M15.500 5 H22.500"/>
  </svg>
  <div class="cap" style="left:612px">Comment</div>
  <!-- hyperlink -->
  <svg class="ico" style="left:658px;top:10px" width="26" height="26" viewBox="0 0 26 26" fill="none" stroke="#444" stroke-width="1">
    <g transform="rotate(-43 13 13)">
      <rect x="-.5" y="8.500" width="15" height="9" rx="4.500"/><rect x="3.500" y="12" width="5.500" height="2" rx="1"/>
      <rect x="11.500" y="8.500" width="15" height="9" rx="4.500" fill="#f7f7f7"/><rect x="17" y="12" width="5.500" height="2" rx="1"/>
      <path d="M11.600 12 H9 M11.600 14 H9 M14.500 12 H17.500 M14.500 14 H17.500" />
    </g>
  </svg>
  <div class="cap" style="left:670px">Hyperlink</div>
  <div class="sep" style="left:705px"></div>
  <!-- header footer -->
  <svg class="ico" style="left:730px;top:10px" width="22" height="26" viewBox="0 0 22 26" fill="none" stroke="#444" stroke-width="1.200">
    <rect x="2" y="2" width="18" height="21.500" rx="1" stroke="#333"/><path d="M4.500 5.200 H17.500 M4.500 20.300 H17.500" stroke-width="2.800" stroke="#222"/>
  </svg>
  <div class="cap" style="left:741px">Header &amp;<br>Footer</div>
  <div class="sep" style="left:776px"></div>
  <!-- equation -->
  <svg class="ico" style="left:795px;top:10px" width="30" height="26" viewBox="0 0 30 26" fill="none" stroke="#444" stroke-width="1">
    <path d="M2.500 16 L4.500 14.500 L7 21.500 L10.500 5.500 H27"/>
    <text x="11.500" y="20.500" font-family="Liberation Serif, serif" font-style="italic" font-size="21" fill="#444" stroke="none">x</text>
  </svg>
  <div class="cap" style="left:809px">Equation</div>
  <svg class="ico" style="left:807.5px;top:52px" width="7" height="5" viewBox="0 0 7 5" fill="none" stroke="#333" stroke-width="1.300"><path d="M.9 .9 L3.500 3.500 L6.100 .9"/></svg>
  <!-- symbol -->
  <div class="abs" style="left:848px;top:5px;width:26px;text-align:center;font-family:'Liberation Serif',serif;font-size:29.500px;line-height:34px;color:#444">&#937;</div>
  <div class="cap" style="left:861px">Symbol</div>
  <svg class="ico" style="left:858.5px;top:52px" width="7" height="5" viewBox="0 0 7 5" fill="none" stroke="#333" stroke-width="1.300"><path d="M.9 .9 L3.500 3.500 L6.100 .9"/></svg>
  <div class="sep" style="left:891px"></div>
  <!-- slicer -->
  <svg class="ico" style="left:906px;top:10px" width="26" height="26" viewBox="0 0 26 26" fill="none" stroke="#444" stroke-width="1">
    <path d="M13 21.500 H2.500 V2.500 H19.500 V13"/><rect x="4.500" y="4.500" width="13" height="2"/><rect x="4.500" y="8.500" width="13" height="2"/><path d="M4.500 12.500 H15 M4.500 14.500 H13" />
    <path d="M12 14.500 H25 L19.800 19.500 V25 L17.200 23.200 V19.500 Z" fill="#444"/>
  </svg>
  <div class="cap" style="left:917px">Slicer</div>
  <div class="abs" style="left:0;top:0;width:99px;height:1px;background:#40865c"></div>
  <div class="abs" style="left:153px;top:0;width:1087px;height:1px;background:#40865c"></div>
</div>

<div id="lb">
  <!-- search : center (19,152) -->
  <svg class="ico" style="left:10px;top:20px" width="20" height="20" viewBox="0 0 20 20" fill="none" stroke="#444" stroke-width="1.100"><circle cx="8.800" cy="8.300" r="5.600"/><path d="M12.800 12.300 L17 16.500"/></svg>
  <!-- comments -->
  <svg class="ico" style="left:10px;top:60px" width="22" height="18" viewBox="0 0 22 18" fill="none" stroke="#444" stroke-width="1.100">
    <path d="M3.500 2.500 H16.500 V11.500 H8.500 L5.500 14 V11.500 H3.500 Z"/><path d="M6 5.500 H14 M6 8.500 H11"/>
    <rect x="10.500" y="9.500" width="9.500" height="6" rx="1.200" fill="#f5c346" stroke="none"/><path d="M12.500 11.500 H18 M12.500 13.500 H18" stroke-width="1"/>
  </svg>
  <!-- chat -->
  <svg class="ico" style="left:10px;top:98px" width="22" height="18" viewBox="0 0 22 18" fill="none" stroke="#444" stroke-width="1.100">
    <path d="M15.500 4.500 V2.500 H2.500 V12.500 L4.500 11"/><path d="M5.500 5.500 H18.500 V16 L16 13.500 H5.500 Z"/><path d="M8 9.500 h1.800 M11 9.500 h1.800 M14 9.500 h1.800" stroke-width="1.600"/>
  </svg>
  <!-- spell -->
  <svg class="ico" style="left:10px;top:137px" width="22" height="16" viewBox="0 0 22 16" fill="none" stroke="#444" stroke-width="1">
    <path d="M3.500 8 V3.500 Q3.500 2.500 4.500 2.500 H5.500 Q6.500 2.500 6.500 3.500 V8 M3.500 5.500 H6.500"/>
    <path d="M8.500 2.500 V7.500 H10.500 Q11.500 7.500 11.500 6.300 Q11.500 5 10.500 5 H8.500 M10.500 5 Q11.500 5 11.500 3.700 Q11.500 2.500 10.500 2.500 H8.500"/>
    <path d="M16.500 4 V3.500 Q16.500 2.500 15.500 2.500 H14.500 Q13.500 2.500 13.500 3.500 V7.500"/>
    <path d="M9 10.500 L11.500 13 L17.500 6.500" stroke-width="1.200"/>
  </svg>
  <!-- feedback -->
  <svg class="ico" style="left:10px;top:173px" width="22" height="18" viewBox="0 0 22 18" fill="none" stroke="#444" stroke-width="1.100">
    <path d="M2.500 6.500 H6.500 L11.500 3 V14.500 L6.500 11 H2.500 Z"/><path d="M5 11 V13.500"/><path d="M13.500 6 Q15 8.700 13.500 11.500 M15.500 4.500 Q18 8.700 15.500 13"/>
  </svg>
  <!-- info -->
  <svg class="ico" style="left:11px;top:211px" width="20" height="20" viewBox="0 0 20 20" fill="none" stroke="#444" stroke-width="1.100"><circle cx="9.500" cy="9.500" r="7.200"/><path d="M9.500 8.500 V13.500 M9.500 5.500 V7" /></svg>
</div>

<div id="fb">
  <div class="nm">A2</div>
  <svg class="ico" style="left:85.500px;top:7.500px" width="7" height="5" viewBox="0 0 7 5" fill="none" stroke="#333" stroke-width="1.200"><path d="M.8 .8 L3.500 3.500 L6.200 .8"/></svg>
  <div class="fx"><span style="position:absolute;left:4px;top:0;font-family:'Liberation Serif',serif;font-style:italic;font-size:16px;line-height:19px;color:#444">fx</span></div>
  <div class="val">Item</div>
  <svg class="ico" style="left:928.500px;top:7.500px" width="7" height="5" viewBox="0 0 7 5" fill="none" stroke="#333" stroke-width="1.200"><path d="M.8 .8 L3.500 3.500 L6.200 .8"/></svg>
</div>

<div id="rp">
<div class="lbl b" style="left:16px;top:7.5px;letter-spacing:.05px">Rows</div>
<div class="lbl b" style="left:112px;top:7.5px;letter-spacing:.05px">Columns</div>
<div class="chk" style="left:15px;top:22px"><svg class="ico" style="left:1px;top:2px" width="10" height="8" viewBox="0 0 10 8" fill="none" stroke="#333" stroke-width="1.900"><path d="M.8 3.800 L3.700 6.600 L9.200 1"/></svg></div>
<div class="lbl" style="left:37px;top:23px;">Header</div>
<div class="chk" style="left:15px;top:45px"><svg class="ico" style="left:1px;top:2px" width="10" height="8" viewBox="0 0 10 8" fill="none" stroke="#333" stroke-width="1.900"><path d="M.8 3.800 L3.700 6.600 L9.200 1"/></svg></div>
<div class="lbl" style="left:37px;top:46px;">Total</div>
<div class="chk" style="left:15px;top:68px"><svg class="ico" style="left:1px;top:2px" width="10" height="8" viewBox="0 0 10 8" fill="none" stroke="#333" stroke-width="1.900"><path d="M.8 3.800 L3.700 6.600 L9.200 1"/></svg></div>
<div class="lbl" style="left:37px;top:69px;">Banded</div>
<div class="chk" style="left:15px;top:91px"><svg class="ico" style="left:1px;top:2px" width="10" height="8" viewBox="0 0 10 8" fill="none" stroke="#333" stroke-width="1.900"><path d="M.8 3.800 L3.700 6.600 L9.200 1"/></svg></div>
<div class="lbl" style="left:37px;top:92px;">Filter button</div>
<div class="chk" style="left:112px;top:22px"></div>
<div class="lbl" style="left:134px;top:23px;">First</div>
<div class="chk" style="left:112px;top:45px"></div>
<div class="lbl" style="left:134px;top:46px;">Last</div>
<div class="chk" style="left:112px;top:68px"></div>
<div class="lbl" style="left:134px;top:69px;">Banded</div>
<div class="lbl b" style="left:16px;top:115px;letter-spacing:.05px">Select From Template</div>
<div class="abs" style="left:15px;top:129px;width:83px;height:54px;background:#fff;border:1px solid #c0c0c0;border-radius:1px"></div>
<div class="abs" style="left:19px;top:133px;width:62px;height:46px;background:#fff;border:1px solid #c0c0c0"></div>
<svg class="ico" style="left:21px;top:135px" width="58" height="42" viewBox="0 0 58 42"><rect x="0" y="0" width="58" height="42" fill="#fff"/><rect x="0" y="8.4" width="58" height="8.400" fill="#b7dbe3"/><rect x="0" y="25.2" width="58" height="8.400" fill="#b7dbe3"/><g stroke="#2b8ca6" stroke-width="1" fill="none"><rect x=".5" y=".5" width="57" height="41"/><path d="M12.5 0 V42"/><path d="M23.5 0 V42"/><path d="M35.5 0 V42"/><path d="M46.5 0 V42"/><path d="M0 8.5 H58"/><path d="M0 17.5 H58"/><path d="M0 25.5 H58"/><path d="M0 34.5 H58"/></g><g stroke="#000" stroke-width="1"><path d="M3 4.5 h6"/><path d="M15 4.5 h6"/><path d="M26 4.5 h6"/><path d="M38 4.5 h6"/><path d="M49 4.5 h6"/><path d="M3 12.5 h6"/><path d="M15 12.5 h6"/><path d="M26 12.5 h6"/><path d="M38 12.5 h6"/><path d="M49 12.5 h6"/><path d="M3 21.5 h6"/><path d="M15 21.5 h6"/><path d="M26 21.5 h6"/><path d="M38 21.5 h6"/><path d="M49 21.5 h6"/><path d="M3 29.5 h6"/><path d="M15 29.5 h6"/><path d="M26 29.5 h6"/><path d="M38 29.5 h6"/><path d="M49 29.5 h6"/><path d="M3 37.5 h6"/><path d="M15 37.5 h6"/><path d="M26 37.5 h6"/><path d="M38 37.5 h6"/><path d="M49 37.5 h6"/></g></svg>
<svg class="ico" style="left:85px;top:158px" width="7" height="5" viewBox="0 0 7 5" fill="none" stroke="#444" stroke-width="1"><path d="M.7 .8 L3.500 3.600 L6.300 .8"/></svg>
<div class="hr" style="left:15px;top:189px"></div>
<svg class="ico" style="left:15px;top:198px" width="20" height="20" viewBox="0 0 20 20" fill="none" stroke="#444" stroke-width="1"><rect x="6.500" y="6.500" width="7" height="7"/><path d="M10 6.500 V13.500 M6.500 10 H13.500"/><path d="M10 1.500 V5 M8 3.500 L10 1.500 L12 3.500 M10 15 V18.500 M8 16.500 L10 18.500 L12 16.500 M1.500 10 H5 M3.500 8 L1.500 10 L3.500 12 M15 10 H18.500 M16.500 8 L18.500 10 L16.500 12"/></svg>
<div class="lbl" style="left:39px;top:201.5px;">Resize table</div>
<svg class="ico" style="left:16px;top:228px" width="18" height="15" viewBox="0 0 18 15" fill="none" stroke="#444" stroke-width="1"><rect x="1" y="1" width="5" height="13" fill="#bdbdbd" stroke="none"/><rect x="1" y="5" width="16" height="4.500" fill="#bdbdbd" stroke="none"/><rect x="6" y="5" width="5.500" height="4.500" fill="#555" stroke="none"/><rect x="1.500" y="1.500" width="15" height="12"/><path d="M6.500 1.500 V13.500 M11.500 1.500 V13.500 M1.500 5.500 H16.500 M1.500 9.500 H16.500"/></svg>
<div class="lbl" style="left:39px;top:229.5px;">Rows &amp; Columns</div>
<svg class="ico" style="left:129px;top:235px" width="7" height="5" viewBox="0 0 7 5" fill="none" stroke="#444" stroke-width="1"><path d="M.7 .8 L3.500 3.600 L6.300 .8"/></svg>
<div class="hr" style="left:15px;top:254px"></div>
<div class="lbl b" style="left:15.5px;top:263.5px;letter-spacing:.05px">Table actions</div>
<svg class="ico" style="left:16px;top:288px" width="18" height="17" viewBox="0 0 18 17" fill="none" stroke="#444" stroke-width="1"><rect x="1.500" y="1.500" width="4" height="13"/><rect x="12.500" y="1.500" width="4" height="13"/><path d="M3 4.500 h1 M3 8 h1 M3 11.500 h1 M14 4.500 h1 M14 8 h1 M14 11.500 h1" stroke-width="1.600"/><path d="M7 8 H11 M9.500 6.300 L11.200 8 L9.500 9.700"/></svg>
<div class="lbl" style="left:39px;top:289.5px;">Remove duplicates</div>
<svg class="ico" style="left:16px;top:315px" width="18" height="18" viewBox="0 0 18 18" fill="none" stroke="#444" stroke-width="1"><rect x="1.500" y="1.500" width="12" height="6"/><path d="M7.500 1.500 V7.500 M3.500 4 h2 M9.500 4 h2 M10 5.500 l.5 .5 .5 -.5" stroke-width="1.100"/><rect x="7.500" y="10.500" width="9" height="5"/><path d="M9.500 13 H14.500"/><path d="M5 10 C2 10 2 14.500 5 14.500 M3.600 13 L5.200 14.600 L3.600 16.200"/></svg>
<div class="lbl" style="left:39px;top:317.5px;">Convert to range</div>
<svg class="ico" style="left:16px;top:343px" width="18" height="19" viewBox="0 0 18 19" fill="none" stroke="#444" stroke-width="1"><path d="M9 13.500 H1.500 V1.500 H13.500 V8"/><rect x="3.500" y="3.500" width="8" height="2"/><path d="M3.500 8.500 H10"/><path d="M8 9.500 H17.500 L13.800 13.300 V18 L11.700 16.500 V13.300 Z" fill="#444" stroke="none"/></svg>
<div class="lbl" style="left:39px;top:345.5px;">Insert slicer</div>
<svg class="ico" style="left:16px;top:372px" width="18" height="17" viewBox="0 0 18 17" fill="none" stroke="#444" stroke-width="1"><rect x="1.500" y="1.500" width="3" height="3"/><rect x="7.500" y="1.500" width="8" height="3"/><rect x="1.500" y="7.500" width="3" height="8"/><path d="M8 14 C12 14 14.500 12 14.500 8.500 M8 14 L10 12.300 M8 14 L10 15.700 M14.500 8.500 L12.800 10.500 M14.500 8.500 L16.200 10.500"/></svg>
<div class="lbl" style="left:39px;top:373.5px;">Insert pivot table</div>
<div class="hr" style="left:15px;top:398px"></div>
<div class="lbl" style="left:53px;top:407.5px;border-bottom:1px dotted #666;height:15px">Show advanced settings</div>
</div>
<div id="rb">
<div class="abs" style="left:0;top:53px;width:40px;height:30px;background:#7d858c"></div>
<svg class="ico" style="left:12.5px;top:23.0px;opacity:1.0" width="16" height="14" viewBox="0 0 16 14" fill="none" stroke="#444" stroke-width="1"><rect x=".7" y="1.600" width="14.600" height="10.800" rx=".6" fill="#eee" stroke-width="1.300" stroke="#222"/><path d="M3.500 1.500 V12.500 M12.500 1.500 V12.500 M.5 3.800 H15.500 M.5 10.200 H15.500" stroke="#aaa" stroke-width=".7"/><rect x="3.700" y="4.500" width="8.600" height="5" fill="#888" stroke="#222" stroke-width="1.100"/></svg>
<svg class="ico" style="left:12px;top:63px" width="16" height="11" viewBox="0 0 16 11"><rect x="0" y="0" width="16" height="11" rx=".5" fill="#f4f4f4"/><g fill="#7d858c"><rect x="1.3" y="2.1" width="3.600" height="1.900"/><rect x="1.3" y="5.1" width="3.600" height="1.900"/><rect x="1.3" y="8" width="3.600" height="1.900"/><rect x="6.3" y="2.1" width="3.600" height="1.900"/><rect x="6.3" y="5.1" width="3.600" height="1.900"/><rect x="6.3" y="8" width="3.600" height="1.900"/><rect x="11.3" y="2.1" width="3.600" height="1.900"/><rect x="11.3" y="5.1" width="3.600" height="1.900"/><rect x="11.3" y="8" width="3.600" height="1.900"/></g></svg>
<svg class="ico" style="left:11.0px;top:98.0px;opacity:0.5" width="18" height="18" viewBox="0 0 18 18" fill="none" stroke="#444" stroke-width="1"><path d="M5 10.500 H1.500 V1.500 H10.500 V4"/><circle cx="10.500" cy="10.500" r="5"/></svg>
<svg class="ico" style="left:12.0px;top:136.0px;opacity:0.5" width="16" height="16" viewBox="0 0 16 16" fill="none" stroke="#444" stroke-width="1"><rect x="1.500" y="1.500" width="13" height="13"/><circle cx="5" cy="5" r="1.200"/><path d="M1.500 11.500 L4.500 9 L6.500 10.500 L10.500 6.500 L14.500 11"/></svg>
<svg class="ico" style="left:12.0px;top:174.5px;opacity:0.5" width="16" height="16" viewBox="0 0 16 16" fill="none" stroke="#444" stroke-width="1"><rect x="1.500" y="10.500" width="3" height="4"/><rect x="6.500" y="7.500" width="3" height="7"/><rect x="11.500" y="1.500" width="3" height="13"/></svg>
<div class="abs" style="left:12px;top:210px;width:16px;text-align:center;font-size:16px;line-height:18px;color:#444;opacity:0.5;font-weight:bold">&#182;</div>
<svg class="ico" style="left:11.0px;top:248.0px;opacity:0.5" width="18" height="20" viewBox="0 0 18 20" fill="none" stroke="#444" stroke-width="1"><text x="1" y="11.500" font-family="Liberation Sans, sans-serif" font-size="14" fill="#444" stroke="none" letter-spacing="-1">Ta</text><path d="M3.500 17.500 C6.500 15 10.500 15 13.500 17.500"/></svg>
<svg class="ico" style="left:12.0px;top:288.5px;opacity:0.5" width="16" height="15" viewBox="0 0 16 15" fill="none" stroke="#444" stroke-width="1"><rect x="1.500" y="1.500" width="3" height="3"/><rect x="7.500" y="1.500" width="7" height="3"/><rect x="1.500" y="7.500" width="3" height="6"/><path d="M8 12.500 C11 12.500 13 11 13 8 M8 12.500 L9.800 11 M8 12.500 L9.800 14 M13 8 L11.500 9.800 M13 8 L14.500 9.800"/></svg>
<svg class="ico" style="left:11.5px;top:325.5px;opacity:0.5" width="17" height="18" viewBox="0 0 17 18" fill="none" stroke="#444" stroke-width="1"><path d="M8 12.500 H1.500 V1.500 H12.500 V7"/><rect x="3.500" y="3.500" width="7" height="2"/><path d="M3.500 8.500 H9"/><path d="M7.500 9 H16.500 L13 12.800 V17.500 L11 16 V12.800 Z" fill="#444" stroke="none"/></svg>
</div>

<div id="sb">
  <svg class="ico" style="left:17px;top:6px" width="8" height="12" viewBox="0 0 8 12" fill="none" stroke="#444" stroke-width="1" opacity=".45"><path d="M6.500 .8 L1.200 6 L6.500 11.200"/></svg>
  <svg class="ico" style="left:42px;top:6px" width="8" height="12" viewBox="0 0 8 12" fill="none" stroke="#444" stroke-width="1"><path d="M1.500 .8 L6.800 6 L1.500 11.200"/></svg>
  <div class="abs" style="left:68px;top:0;width:1px;height:23px;background:#cbcbcb"></div>
  <svg class="ico" style="left:82px;top:7px" width="11" height="11" viewBox="0 0 11 11" fill="none" stroke="#444" stroke-width="1"><path d="M5.500 0 V11 M0 5.500 H11"/></svg>
  <svg class="ico" style="left:104px;top:7px" width="12" height="11" viewBox="0 0 12 11" fill="none" stroke="#444" stroke-width="1"><path d="M.5 1.500 H11.500 M.5 4.500 H11.500 M.5 7.500 H11.500 M.5 10.500 H11.500"/></svg>
  <div class="st" style="left:128px;width:99px;background:#fff;border-left:1px solid #cbcbcb;border-right:1px solid #cbcbcb;font-weight:bold;color:#444;box-shadow:inset 0 3px 0 #12a04a">Basic features</div>
  <div class="st" style="left:227px;width:104px;border-right:1px solid #cbcbcb;color:#999;box-shadow:inset 0 3px 0 #2ea0b8">Chart examples</div>
  <div class="st" style="left:331px;width:87px;border-right:1px solid #cbcbcb;color:#999;box-shadow:inset 0 3px 0 #e02b2b">Pivot Tables</div>
  <div class="st" style="left:418px;width:108px;padding-left:6px;border-right:1px solid #cbcbcb;color:#999;box-shadow:inset 0 3px 0 #4b4b8c">Modern Formulas</div>
  <div class="abs" style="left:665px;top:0;width:1px;height:23px;background:#cbcbcb"></div>
  <div class="st" style="left:680px">Average: 2509.394</div>
  <div class="st" style="left:786px">Count: 55</div>
  <div class="st" style="left:846px">Min: 68</div>
  <div class="st" style="left:896px">Max: 9579.5</div>
  <div class="st" style="left:970px">Sum: 100375.76</div>
  <svg class="ico" style="left:1079px;top:11px" width="11" height="2" viewBox="0 0 11 2"><path d="M0 1 H11" stroke="#444" stroke-width="1"/></svg>
  <div class="st" style="left:1106px;font-weight:bold;letter-spacing:.1px">Zoom 100%</div>
  <svg class="ico" style="left:1185px;top:7px" width="11" height="11" viewBox="0 0 11 11" fill="none" stroke="#444" stroke-width="1"><path d="M5.500 0 V11 M0 5.500 H11"/></svg>
</div>

</div>
<div id="mask"></div>
<div id="dlg">
<div class="head">Insert Chart</div>
<svg class="ico" style="left:617px;top:11px" width="13" height="13" viewBox="0 0 13 13" fill="none" stroke="#666" stroke-width="1"><path d="M1 1 L12 12 M12 1 L1 12"/></svg>
<div class="menu"></div>
<div class="mi act" style="top:36px"><svg class="ico" style="left:10px;top:8px" width="19" height="17" viewBox="0 0 19 17"><g fill="#fff"><rect x="1" y="11" width="4" height="4"/><rect x="6.500" y="8" width="4" height="7"/><rect x="12" y="4" width="4" height="11"/><path d="M5 2.500 L5.700 4.300 L7.500 5 L5.700 5.700 L5 7.500 L4.300 5.700 L2.500 5 L4.300 4.300 Z"/><path d="M1.500 .5 L1.900 1.600 L3 2 L1.900 2.400 L1.500 3.500 L1.100 2.400 L0 2 L1.100 1.600 Z" opacity=".8"/><path d="M8.500 0 L8.800 .9 L9.700 1.200 L8.800 1.500 L8.500 2.400 L8.200 1.500 L7.300 1.200 L8.200 .9 Z" opacity=".8"/></g></svg>Recommended</div>
<div class="mi" style="top:68px"><svg class="ico" style="left:10px;top:8px" width="19" height="17" viewBox="0 0 19 17"><g fill="#666"><rect x="2" y="11" width="3" height="4"/><rect x="6" y="8.500" width="3" height="6.500"/><rect x="10" y="5" width="3" height="10"/><rect x="14" y="1" width="3" height="14"/></g></svg>Column</div>
<div class="mi" style="top:100px"><svg class="ico" style="left:10px;top:8px" width="19" height="17" viewBox="0 0 19 17"><g fill="none" stroke="#666" stroke-width="1"><path d="M2.500 1 V15.500 H16.500"/><path d="M2.500 12.500 L7.500 6.500 L11 10 L15.500 5" /><path d="M2.500 10 L6.500 7 L10 11.500 L13.500 5 L16 7.500" stroke-width=".7" opacity=".8"/></g></svg>Line</div>
<div class="mi" style="top:132px"><svg class="ico" style="left:10px;top:8px" width="19" height="17" viewBox="0 0 19 17"><circle cx="9.500" cy="8.500" r="7.500" fill="#666"/><path d="M9 8 V1 A7.500 7.500 0 0 0 2 8 Z" fill="#bdbdbd"/></svg>Pie</div>
<div class="mi" style="top:164px"><svg class="ico" style="left:10px;top:8px" width="19" height="17" viewBox="0 0 19 17"><g fill="#666"><rect x="2" y="1" width="3" height="3"/><rect x="2" y="5" width="6.500" height="3"/><rect x="2" y="9" width="10" height="3"/><rect x="2" y="13" width="14" height="3"/></g></svg>Bar</div>
<div class="mi" style="top:196px"><svg class="ico" style="left:10px;top:8px" width="19" height="17" viewBox="0 0 19 17"><path d="M2 15 L2 11 L6 5.500 L9.500 10 L16 4 V15 Z" fill="#bdbdbd"/><path d="M2 15 L2 13 L6.500 9.500 L10 12 L16 7 V15 Z" fill="#666"/></svg>Area</div>
<div class="mi" style="top:228px;padding-left:34px"><svg class="ico" style="left:10px;top:8px" width="19" height="17" viewBox="0 0 19 17"><g fill="none" stroke="#666" stroke-width="1"><path d="M1.500 0 V15.500 H17"/><path d="M5.700 5.500 V14 M10.600 4 V11.500 M15.700 .5 V9.500"/></g><g fill="#666"><rect x="4.400" y="7.500" width="2.600" height="4.500"/><rect x="9.300" y="6" width="2.600" height="3"/><rect x="14.400" y="2" width="2.600" height="5.500"/></g></svg>Stock</div>
<div class="mi" style="top:260px"><svg class="ico" style="left:10px;top:8px" width="19" height="17" viewBox="0 0 19 17"><g fill="none" stroke="#666" stroke-width="1"><path d="M1.500 1 V15.500 H16.500"/></g><g fill="#666"><rect x="4" y="11" width="1.500" height="1.500"/><rect x="6.500" y="8" width="1.500" height="1.500"/><rect x="5" y="4" width="1.500" height="1.500"/><rect x="9" y="10.500" width="1.500" height="1.500"/><rect x="10.500" y="6" width="1.500" height="1.500"/><rect x="13" y="9" width="1.500" height="1.500"/><rect x="13.500" y="3.500" width="1.500" height="1.500"/><rect x="8" y="13" width="1.500" height="1.500"/></g></svg>XY (Scatter)</div>
<div class="mi" style="top:292px"><svg class="ico" style="left:10px;top:8px" width="19" height="17" viewBox="0 0 19 17"><g fill="none" stroke="#666"><path d="M9.5 0.5 L17.3 6.2 L14.3 15.3 L4.7 15.3 L1.7 6.2 Z" stroke-width=".7"/><path d="M9.5 0.5 L14.3 15.3 L1.7 6.2 L17.3 6.2 L4.7 15.3 Z" stroke-width="1"/><path d="M9.5 4.5 L13.5 7.4 L12.0 12.1 L7.0 12.1 L5.5 7.4 Z" stroke-width=".7"/></g></svg>Radar</div>
<div class="mi" style="top:324px"><svg class="ico" style="left:10px;top:8px" width="19" height="17" viewBox="0 0 19 17"><g fill="#c4c4c4"><rect x="2.500" y="11" width="2.600" height="5"/><rect x="6.500" y="7" width="2.600" height="9"/><rect x="10.500" y="5" width="2.600" height="11"/><rect x="14.500" y="10.500" width="2.600" height="5.500"/></g><g fill="none" stroke="#666" stroke-width="1"><path d="M1.500 0 V16 H17"/><path d="M2 14 L7.500 7 L11 11 L16.500 4.500" stroke-width="1.200"/></g></svg>Combo</div>
<div class="ct act" style="left:181px;top:46px"><svg class="ico" style="left:-1px;top:-1px" width="40" height="40" viewBox="0 0 40 40"><rect x="6" y="26" width="6" height="8" fill="#fff"/><rect x="13" y="20" width="6" height="14" fill="#fff"/><rect x="20" y="14" width="6" height="20" fill="#fff"/><rect x="27" y="6" width="6" height="28" fill="#fff"/></svg></div>
<div class="ct" style="left:226px;top:46px"><svg class="ico" style="left:-1px;top:-1px" width="40" height="40" viewBox="0 0 40 40"><rect x="6" y="25" width="6" height="9" fill="#b5b5b5"/><rect x="13" y="20" width="6" height="14" fill="#b5b5b5"/><rect x="20" y="14" width="6" height="20" fill="#b5b5b5"/><rect x="27" y="6" width="6" height="28" fill="#b5b5b5"/><rect x="6" y="29" width="6" height="5" fill="#444"/><rect x="13" y="26" width="6" height="8" fill="#444"/><rect x="20" y="22" width="6" height="12" fill="#444"/><rect x="27" y="17" width="6" height="17" fill="#444"/></svg></div>
<div class="ct" style="left:271px;top:46px"><svg class="ico" style="left:-1px;top:-1px" width="40" height="40" viewBox="0 0 40 40"><rect x="6" y="6" width="6" height="28" fill="#b5b5b5"/><rect x="13" y="6" width="6" height="28" fill="#b5b5b5"/><rect x="20" y="6" width="6" height="28" fill="#b5b5b5"/><rect x="27" y="6" width="6" height="28" fill="#b5b5b5"/><rect x="6" y="21" width="6" height="13" fill="#444"/><rect x="13" y="18" width="6" height="16" fill="#444"/><rect x="20" y="16" width="6" height="18" fill="#444"/><rect x="27" y="14" width="6" height="20" fill="#444"/></svg></div>
<div class="ct" style="left:316px;top:46px"><svg class="ico" style="left:-1px;top:-1px" width="40" height="40" viewBox="0 0 40 40"><g fill="none" stroke="#444"><path d="M7.500 7 V33.500 H33.500" stroke-width="1"/><path d="M7.500 28.800 L24.500 12 L32.500 20" stroke-width=".6" stroke="#666"/><path d="M7.500 23.600 L16.700 15.400 L25.400 22 L32.500 14.300" stroke-width="1.100"/></g></svg></div>
<div class="ct" style="left:361px;top:46px"><svg class="ico" style="left:-1px;top:-1px" width="40" height="40" viewBox="0 0 40 40"><rect x="6" y="6" width="8.5" height="5.700" fill="#444"/><rect x="6" y="13" width="13.5" height="5.700" fill="#444"/><rect x="6" y="20" width="19.5" height="5.700" fill="#444"/><rect x="6" y="27" width="27.5" height="5.700" fill="#444"/></svg></div>
<div class="ct" style="left:406px;top:46px"><svg class="ico" style="left:-1px;top:-1px" width="40" height="40" viewBox="0 0 40 40"><rect x="6" y="6" width="8.7" height="5.700" fill="#b5b5b5"/><rect x="6" y="13" width="13.9" height="5.700" fill="#b5b5b5"/><rect x="6" y="20" width="19.9" height="5.700" fill="#b5b5b5"/><rect x="6" y="27" width="27.8" height="5.700" fill="#b5b5b5"/><rect x="6" y="6" width="4.6" height="5.700" fill="#444"/><rect x="6" y="13" width="8" height="5.700" fill="#444"/><rect x="6" y="20" width="12" height="5.700" fill="#444"/><rect x="6" y="27" width="16.9" height="5.700" fill="#444"/></svg></div>
<div class="ct" style="left:451px;top:46px"><svg class="ico" style="left:-1px;top:-1px" width="40" height="40" viewBox="0 0 40 40"><rect x="6" y="6" width="28" height="5.700" fill="#b5b5b5"/><rect x="6" y="13" width="28" height="5.700" fill="#b5b5b5"/><rect x="6" y="20" width="28" height="5.700" fill="#b5b5b5"/><rect x="6" y="27" width="28" height="5.700" fill="#b5b5b5"/><rect x="6" y="6" width="13.9" height="5.700" fill="#444"/><rect x="6" y="13" width="16" height="5.700" fill="#444"/><rect x="6" y="20" width="18" height="5.700" fill="#444"/><rect x="6" y="27" width="20" height="5.700" fill="#444"/></svg></div>
<div class="ct" style="left:496px;top:46px"><svg class="ico" style="left:-1px;top:-1px" width="40" height="40" viewBox="0 0 40 40"><path d="M7.500 7 V33.500 H33.500" fill="none" stroke="#444" stroke-width="1"/><circle cx="10.8" cy="11.1" r="1.500" fill="#999"/><circle cx="18.9" cy="17.3" r="1.500" fill="#444"/><circle cx="28.9" cy="15.4" r="1.500" fill="#999"/><circle cx="26" cy="21.3" r="1.500" fill="#444"/><circle cx="17" cy="23.4" r="1.500" fill="#999"/><circle cx="22.8" cy="26.3" r="1.500" fill="#999"/><circle cx="13" cy="29.1" r="1.500" fill="#444"/><circle cx="31.9" cy="29.1" r="1.500" fill="#444"/></svg></div>
<div class="lbl b" style="left:181px;top:103px;letter-spacing:.2px">Clustered column</div>
<div class="abs" style="left:184px;top:121px;width:430px;height:258px;border:1px solid #cbcbcb;background:#fff"></div>
<svg class="ico" style="left:184px;top:121px" width="430" height="258" viewBox="0 0 430 258" font-family="Liberation Sans, sans-serif"><path d="M74.5 151.5 H413" stroke="#d9d9d9" stroke-width="1" fill="none"/><text transform="translate(64.5,155.2) scale(.905,1)" text-anchor="end" font-size="10.700" fill="#595959">$0.00</text><path d="M74.5 135.1 H413" stroke="#d9d9d9" stroke-width="1" fill="none"/><text transform="translate(64.5,138.8) scale(.905,1)" text-anchor="end" font-size="10.700" fill="#595959">$2,000.00</text><path d="M74.5 118.7 H413" stroke="#d9d9d9" stroke-width="1" fill="none"/><text transform="translate(64.5,122.4) scale(.905,1)" text-anchor="end" font-size="10.700" fill="#595959">$4,000.00</text><path d="M74.5 102.3 H413" stroke="#d9d9d9" stroke-width="1" fill="none"/><text transform="translate(64.5,106.0) scale(.905,1)" text-anchor="end" font-size="10.700" fill="#595959">$6,000.00</text><path d="M74.5 85.9 H413" stroke="#d9d9d9" stroke-width="1" fill="none"/><text transform="translate(64.5,89.6) scale(.905,1)" text-anchor="end" font-size="10.700" fill="#595959">$8,000.00</text><path d="M74.5 69.5 H413" stroke="#d9d9d9" stroke-width="1" fill="none"/><text transform="translate(64.5,73.2) scale(.905,1)" text-anchor="end" font-size="10.700" fill="#595959">$10,000.00</text><path d="M74.5 53.1 H413" stroke="#d9d9d9" stroke-width="1" fill="none"/><text transform="translate(64.5,56.8) scale(.905,1)" text-anchor="end" font-size="10.700" fill="#595959">$12,000.00</text><rect x="79.80" y="129.90" width="4.84" height="21.60" fill="#2ea3c4"/><rect x="85.94" y="118.78" width="4.84" height="32.72" fill="#e0222e"/><rect x="92.08" y="111.89" width="4.84" height="39.61" fill="#ee6b1e"/><rect x="98.22" y="101.81" width="4.84" height="49.69" fill="#2f5f9e"/><rect x="113.65" y="137.81" width="4.84" height="13.69" fill="#2ea3c4"/><rect x="119.79" y="135.92" width="4.84" height="15.58" fill="#e0222e"/><rect x="125.93" y="115.70" width="4.84" height="35.80" fill="#ee6b1e"/><rect x="132.07" y="137.81" width="4.84" height="13.69" fill="#2f5f9e"/><rect x="147.50" y="125.80" width="4.84" height="25.70" fill="#2ea3c4"/><rect x="153.64" y="113.78" width="4.84" height="37.72" fill="#e0222e"/><rect x="159.78" y="73.60" width="4.84" height="77.90" fill="#ee6b1e"/><rect x="165.92" y="126.70" width="4.84" height="24.80" fill="#2f5f9e"/><rect x="181.35" y="140.92" width="4.84" height="10.58" fill="#2ea3c4"/><rect x="187.49" y="114.93" width="4.84" height="36.57" fill="#e0222e"/><rect x="193.63" y="141.91" width="4.84" height="9.59" fill="#ee6b1e"/><rect x="199.77" y="118.86" width="4.84" height="32.64" fill="#2f5f9e"/><rect x="215.20" y="140.92" width="4.84" height="10.58" fill="#2ea3c4"/><rect x="221.34" y="129.93" width="4.84" height="21.57" fill="#e0222e"/><rect x="227.48" y="140.92" width="4.84" height="10.58" fill="#ee6b1e"/><rect x="233.62" y="119.68" width="4.84" height="31.82" fill="#2f5f9e"/><rect x="249.05" y="139.69" width="4.84" height="11.81" fill="#2ea3c4"/><rect x="255.19" y="147.89" width="4.84" height="3.61" fill="#e0222e"/><rect x="261.33" y="150.94" width="4.84" height="0.56" fill="#ee6b1e"/><rect x="267.47" y="144.94" width="4.84" height="6.56" fill="#2f5f9e"/><rect x="282.90" y="140.92" width="4.84" height="10.58" fill="#2ea3c4"/><rect x="289.04" y="114.93" width="4.84" height="36.57" fill="#e0222e"/><rect x="295.18" y="126.98" width="4.84" height="24.52" fill="#ee6b1e"/><rect x="301.32" y="129.90" width="4.84" height="21.60" fill="#2f5f9e"/><rect x="316.75" y="139.69" width="4.84" height="11.81" fill="#2ea3c4"/><rect x="322.89" y="146.91" width="4.84" height="4.59" fill="#e0222e"/><rect x="329.03" y="137.81" width="4.84" height="13.69" fill="#ee6b1e"/><rect x="335.17" y="139.69" width="4.84" height="11.81" fill="#2f5f9e"/><rect x="350.60" y="140.92" width="4.84" height="10.58" fill="#2ea3c4"/><rect x="356.74" y="140.92" width="4.84" height="10.58" fill="#e0222e"/><rect x="362.88" y="140.92" width="4.84" height="10.58" fill="#ee6b1e"/><rect x="369.02" y="141.91" width="4.84" height="9.59" fill="#2f5f9e"/><rect x="384.45" y="125.80" width="4.84" height="25.70" fill="#2ea3c4"/><rect x="390.59" y="150.02" width="4.84" height="1.48" fill="#e0222e"/><rect x="396.73" y="144.94" width="4.84" height="6.56" fill="#ee6b1e"/><rect x="402.87" y="130.84" width="4.84" height="20.66" fill="#2f5f9e"/><text transform="translate(95.9,168) rotate(-45) scale(.945,1)" text-anchor="end" font-size="11" fill="#595959">Australian lamb</text><text transform="translate(129.8,168) rotate(-45) scale(.945,1)" text-anchor="end" font-size="11" fill="#595959">Pacific crabs</text><text transform="translate(163.6,168) rotate(-45) scale(.945,1)" text-anchor="end" font-size="11" fill="#595959">Camembert</text><text transform="translate(197.5,168) rotate(-45) scale(.945,1)" text-anchor="end" font-size="11" fill="#595959">Brazilian coffee</text><text transform="translate(231.3,168) rotate(-45) scale(.945,1)" text-anchor="end" font-size="11" fill="#595959">Loisiana sauce</text><text transform="translate(265.2,168) rotate(-45) scale(.945,1)" text-anchor="end" font-size="11" fill="#595959">Marinated pepper</text><text transform="translate(299.0,168) rotate(-45) scale(.945,1)" text-anchor="end" font-size="11" fill="#595959">Mozzarella</text><text transform="translate(332.9,168) rotate(-45) scale(.945,1)" text-anchor="end" font-size="11" fill="#595959">Lavash</text><text transform="translate(366.7,168) rotate(-45) scale(.945,1)" text-anchor="end" font-size="11" fill="#595959">Scotch whisky</text><text transform="translate(400.6,168) rotate(-45) scale(.945,1)" text-anchor="end" font-size="11" fill="#595959">Cherry jam</text><text x="216" y="24" text-anchor="middle" font-size="16" fill="#595959" letter-spacing="-.2">Chart Title</text><rect x="89" y="239.3" width="5.500" height="5.500" fill="#2ea3c4"/><text transform="translate(99.5,245.89999999999998) scale(.915,1)" font-size="10.700" fill="#595959">Sum for Q1</text><rect x="155" y="239.3" width="5.500" height="5.500" fill="#e0222e"/><text transform="translate(165.5,245.89999999999998) scale(.915,1)" font-size="10.700" fill="#595959">Sum for Q2</text><rect x="220" y="239.3" width="5.500" height="5.500" fill="#ee6b1e"/><text transform="translate(230.5,245.89999999999998) scale(.915,1)" font-size="10.700" fill="#595959">Sum for Q3</text><rect x="284.5" y="239.3" width="5.500" height="5.500" fill="#2f5f9e"/><text transform="translate(295.0,245.89999999999998) scale(.915,1)" font-size="10.700" fill="#595959">Sum for Q4</text></svg>
<div class="foot"><div class="btn pri" style="left:230px">OK</div><div class="btn sec" style="left:326px">Cancel</div></div>
</div>

</body>
</html>
